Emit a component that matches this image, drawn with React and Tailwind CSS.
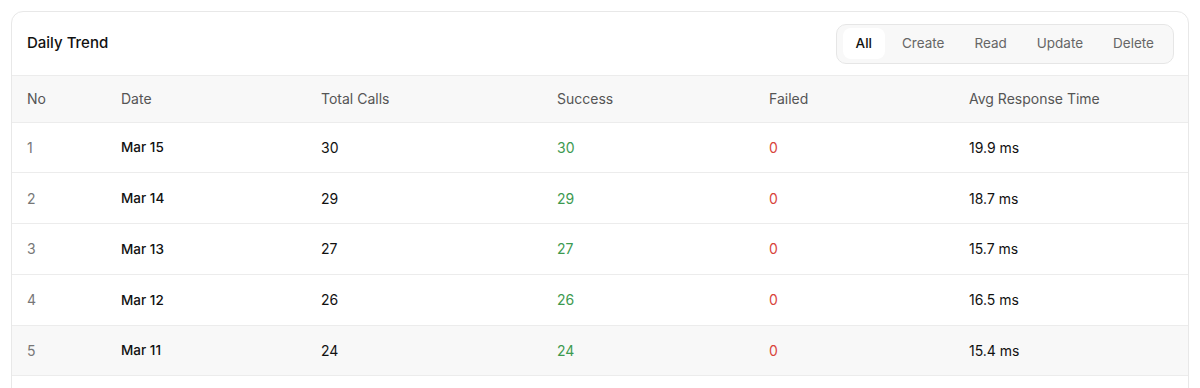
import React, { useState } from "react";

const rows = [
  { no: 1, date: "Mar 15", total: 30, success: 30, failed: 0, avg: "19.9 ms" },
  { no: 2, date: "Mar 14", total: 29, success: 29, failed: 0, avg: "18.7 ms" },
  { no: 3, date: "Mar 13", total: 27, success: 27, failed: 0, avg: "15.7 ms" },
  { no: 4, date: "Mar 12", total: 26, success: 26, failed: 0, avg: "16.5 ms" },
  { no: 5, date: "Mar 11", total: 24, success: 24, failed: 0, avg: "15.4 ms" },
];

const tabs = ["All", "Create", "Read", "Update", "Delete"];

const App = () => {
  const [active, setActive] = useState("All");

  return (
    <div className="min-h-screen bg-white px-[11px] pt-[11px] font-['Inter',sans-serif]">
      <div className="rounded-t-[12px] border border-[#e8e8e8] bg-white overflow-hidden pb-[40px]">
        {/* header */}
        <div className="flex items-center justify-between h-[64px] pl-[15px] pr-[14px] border-b border-[#ececec]">
          <h2 className="text-[15px] font-medium text-[#111]">Daily Trend</h2>
          <div className="flex items-center gap-[4px] h-[40px] px-[6px] rounded-[10px] border border-[#e6e6e6] bg-[#f8f8f8]">
            {tabs.map((t) => (
              <button
                key={t}
                onClick={() => setActive(t)}
                className={
                  active === t
                    ? "h-[31px] px-[13px] rounded-[8px] bg-white text-[13.5px] font-medium text-[#111]"
                    : "h-[31px] px-[13px] rounded-[8px] text-[13.5px] text-[#666]"
                }
              >
                {t}
              </button>
            ))}
          </div>
        </div>

        {/* table */}
        <table className="w-full table-fixed border-collapse text-[14px]">
          <colgroup>
            <col className="w-[94px]" />
            <col className="w-[200px]" />
            <col className="w-[236px]" />
            <col className="w-[212px]" />
            <col className="w-[200px]" />
            <col />
          </colgroup>
          <thead>
            <tr className="bg-[#f8f8f8] h-[46px] border-b border-[#ececec]">
              {["No", "Date", "Total Calls", "Success", "Failed", "Avg Response Time"].map((h) => (
                <th key={h} className="text-left font-normal text-[#555] pl-[15px]">
                  {h}
                </th>
              ))}
            </tr>
          </thead>
          <tbody>
            {rows.map((r) => (
              <tr
                key={r.no}
                className={
                  r.no === 5
                    ? "h-[50.8px] border-b border-[#ececec] bg-[#f8f8f8]"
                    : "h-[50.8px] border-b border-[#ececec]"
                }
              >
                <td className="pl-[15px] text-[#777]">{r.no}</td>
                <td className="pl-[15px] font-medium text-[13.5px] text-[#111]">{r.date}</td>
                <td className="pl-[15px] text-[#111]">{r.total}</td>
                <td className="pl-[15px] text-[#3d9a50]">{r.success}</td>
                <td className="pl-[15px] text-[#d8453b]">{r.failed}</td>
                <td className="pl-[15px] text-[#111]">{r.avg}</td>
              </tr>
            ))}
          </tbody>
        </table>
      </div>
    </div>
  );
};

export default App;
